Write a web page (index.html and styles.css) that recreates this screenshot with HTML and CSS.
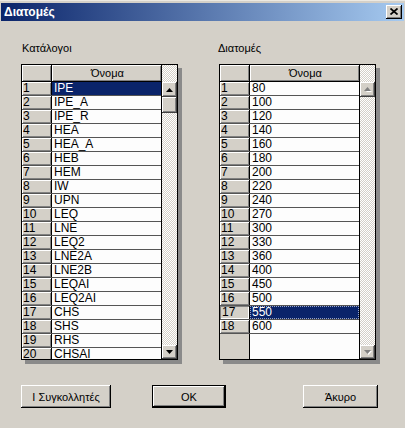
FILE: index.html
```html
<!DOCTYPE html>
<html>
<head>
<meta charset="utf-8">
<link rel="stylesheet" href="styles.css">
</head>
<body>
<div class="window">
  <div class="titlebar">
    <span class="title">Διατομές</span>
    <span class="close"><svg width="8" height="7" viewBox="0 0 8 7"><path d="M0.5 0.5L7.5 6.5M7.5 0.5L0.5 6.5" stroke="#000" stroke-width="1.7" fill="none"/></svg></span>
  </div>
  <div class="content">
    <div class="panel">
      <div class="label">Κατάλογοι</div>
      <div class="grid">
        <div class="table">
          <div class="row head"><div class="rh"></div><div class="cell">Όνομα</div></div>
          <div class="row"><div class="rh">1</div><div class="cell sel">IPE</div></div>
          <div class="row"><div class="rh">2</div><div class="cell">IPE_A</div></div>
          <div class="row"><div class="rh">3</div><div class="cell">IPE_R</div></div>
          <div class="row"><div class="rh">4</div><div class="cell">HEA</div></div>
          <div class="row"><div class="rh">5</div><div class="cell">HEA_A</div></div>
          <div class="row"><div class="rh">6</div><div class="cell">HEB</div></div>
          <div class="row"><div class="rh">7</div><div class="cell">HEM</div></div>
          <div class="row"><div class="rh">8</div><div class="cell">IW</div></div>
          <div class="row"><div class="rh">9</div><div class="cell">UPN</div></div>
          <div class="row"><div class="rh">10</div><div class="cell">LEQ</div></div>
          <div class="row"><div class="rh">11</div><div class="cell">LNE</div></div>
          <div class="row"><div class="rh">12</div><div class="cell">LEQ2</div></div>
          <div class="row"><div class="rh">13</div><div class="cell">LNE2A</div></div>
          <div class="row"><div class="rh">14</div><div class="cell">LNE2B</div></div>
          <div class="row"><div class="rh">15</div><div class="cell">LEQAI</div></div>
          <div class="row"><div class="rh">16</div><div class="cell">LEQ2AI</div></div>
          <div class="row"><div class="rh">17</div><div class="cell">CHS</div></div>
          <div class="row"><div class="rh">18</div><div class="cell">SHS</div></div>
          <div class="row"><div class="rh">19</div><div class="cell">RHS</div></div>
          <div class="row"><div class="rh">20</div><div class="cell">CHSAI</div></div>
        </div>
        <div class="vscroll">
          <div class="track top"></div>
          <div class="sbtn up"><svg width="7" height="4" viewBox="0 0 7 4"><polygon points="3.5,0 7,4 0,4" fill="#000"/></svg></div>
          <div class="thumb"></div>
          <div class="track fill"></div>
          <div class="sbtn down"><svg width="7" height="4" viewBox="0 0 7 4"><polygon points="0,0 7,0 3.5,4" fill="#000"/></svg></div>
        </div>
      </div>
    </div>
    <div class="panel right">
      <div class="label">Διατομές</div>
      <div class="grid">
        <div class="table">
          <div class="row head"><div class="rh"></div><div class="cell">Όνομα</div></div>
          <div class="row"><div class="rh">1</div><div class="cell">80</div></div>
          <div class="row"><div class="rh">2</div><div class="cell">100</div></div>
          <div class="row"><div class="rh">3</div><div class="cell">120</div></div>
          <div class="row"><div class="rh">4</div><div class="cell">140</div></div>
          <div class="row"><div class="rh">5</div><div class="cell">160</div></div>
          <div class="row"><div class="rh">6</div><div class="cell">180</div></div>
          <div class="row"><div class="rh">7</div><div class="cell">200</div></div>
          <div class="row"><div class="rh">8</div><div class="cell">220</div></div>
          <div class="row"><div class="rh">9</div><div class="cell">240</div></div>
          <div class="row"><div class="rh">10</div><div class="cell">270</div></div>
          <div class="row"><div class="rh">11</div><div class="cell">300</div></div>
          <div class="row"><div class="rh">12</div><div class="cell">330</div></div>
          <div class="row"><div class="rh">13</div><div class="cell">360</div></div>
          <div class="row"><div class="rh">14</div><div class="cell">400</div></div>
          <div class="row"><div class="rh">15</div><div class="cell">450</div></div>
          <div class="row"><div class="rh">16</div><div class="cell">500</div></div>
          <div class="row"><div class="rh active">17</div><div class="cell sel focus">550</div></div>
          <div class="row"><div class="rh">18</div><div class="cell">600</div></div>
          <div class="row empty"><div class="rh"></div><div class="cell"></div></div>
        </div>
        <div class="vscroll">
          <div class="track top"></div>
          <div class="sbtn up"><svg width="8" height="5" viewBox="0 0 8 5"><polygon points="4,1 7,4 1,4" fill="#fff" transform="translate(1,1)"/><polygon points="3.5,0 7,4 0,4" fill="#808080"/></svg></div>
          <div class="track fill"></div>
          <div class="sbtn down"><svg width="8" height="5" viewBox="0 0 8 5"><polygon points="0,0 7,0 3.5,4" fill="#fff" transform="translate(1,1)"/><polygon points="0,0 7,0 3.5,4" fill="#808080"/></svg></div>
        </div>
      </div>
    </div>
  </div>
  <div class="buttons">
    <button class="btn weld">Ι Συγκολλητές</button>
    <button class="btn ok">OK</button>
    <button class="btn cancel">Άκυρο</button>
  </div>
</div>
</body>
</html>
```
FILE: styles.css
```css
* { box-sizing: border-box; }
html, body { margin: 0; padding: 0; }
body {
  width: 405px;
  height: 428px;
  overflow: hidden;
  background: #d4d0c8;
  font-family: "Liberation Sans", Arial, sans-serif;
  color: #000;
}
.window {
  width: 405px;
  height: 428px;
  padding-top: 3px;
  background: #d4d0c8;
  border-top: 1px solid #ece9e2;
}
.titlebar {
  height: 18px;
  margin: -1px 1px 0 1px;
  background: linear-gradient(to right, #0a246a 0%, #a6caf0 100%);
  display: flex;
  align-items: center;
  justify-content: space-between;
  padding: 0 2px 0 3px;
}
.title {
  color: #fff;
  font-weight: bold;
  font-size: 12px;
  line-height: 14px;
}
.close {
  width: 16px;
  height: 14px;
  background: #d4d0c8;
  box-shadow: inset -1px -1px #000, inset 1px 1px #fff, inset -2px -2px #808080;
  display: flex;
  align-items: center;
  justify-content: center;
  padding-bottom: 1px;
}
.content {
  display: flex;
  padding: 21px 0 0 21px;
  gap: 41px;
}
.panel { width: 157px; }
.label {
  font-size: 11px;
  line-height: 13px;
  height: 13px;
  margin: 0 0 9px 1px;
}
.right .label { margin-left: -1px; }
.grid {
  display: flex;
  width: 157px;
  height: 296px;
  border: 1px solid #000;
  box-shadow: 4px 4px 0 #8a8a8a;
  background: #fff;
}
.table {
  width: 139px;
  overflow: hidden;
  display: flex;
  flex-direction: column;
}
.row {
  display: flex;
  height: 14px;
  flex: none;
  border-bottom: 1px solid #555;
  font-size: 12px;
  line-height: 13px;
}
.row.head {
  height: 17px;
  border-bottom: 1px solid #000;
}
.rh {
  width: 30px;
  flex: none;
  background: #d4d0c8;
  border-right: 1px solid #000;
  padding-left: 1px;
  box-shadow: inset 1px 1px #fff, inset -1px -1px #808080;
  white-space: nowrap;
}
.rh.active {
  box-shadow: inset 1px 1px #808080, inset -1px -1px #fff;
  padding-left: 2px;
}
.cell {
  flex: 1;
  padding-left: 2px;
  white-space: nowrap;
  background: #fdfdfd;
}
.head .cell {
  background: #d4d0c8;
  text-align: center;
  font-size: 11px;
  line-height: 16px;
  box-shadow: inset 1px 1px #fff, inset -1px -1px #808080;
}
.head .rh { border-right: 1px solid #000; }
.cell.sel {
  background: #0a246a;
  color: #fff;
}
.cell.focus {
  outline: 1px dotted #9aa6c8;
  outline-offset: -1px;
}
.row.empty {
  flex: 1;
  border-bottom: none;
}
.row.empty .rh { box-shadow: none; }
.vscroll {
  width: 16px;
  flex: none;
  display: flex;
  flex-direction: column;
  border-left: 1px solid #000;
}
.track {
  background-image: repeating-conic-gradient(#ffffff 0 25%, #d4d0c8 0 50%);
  background-size: 2px 2px;
}
.track.top { height: 17px; flex: none; }
.track.fill { flex: 1; }
.sbtn, .thumb {
  background: #d4d0c8;
  box-shadow: inset -1px -1px #404040, inset 1px 1px #fff, inset -2px -2px #808080;
  flex: none;
  display: flex;
  align-items: center;
  justify-content: center;
}
.sbtn.up { height: 15px; }
.sbtn.down { height: 14px; }
.thumb { height: 16px; }
.buttons {
  display: flex;
  padding: 25px 0 0 21px;
}
.btn {
  font-family: "Liberation Sans", Arial, sans-serif;
  font-size: 11px;
  height: 23px;
  padding: 0;
  background: #d4d0c8;
  border: none;
  color: #000;
  box-shadow: inset -1px -1px #000, inset 1px 1px #fff, inset -2px -2px #808080;
}
.weld { width: 90px; }
.ok {
  width: 74px;
  margin-left: 41px;
  border: 1px solid #000;
  box-shadow: inset -1px -1px #000, inset 1px 1px #fff, inset -2px -2px #808080;
}
.cancel { width: 75px; margin-left: 77px; }
```
